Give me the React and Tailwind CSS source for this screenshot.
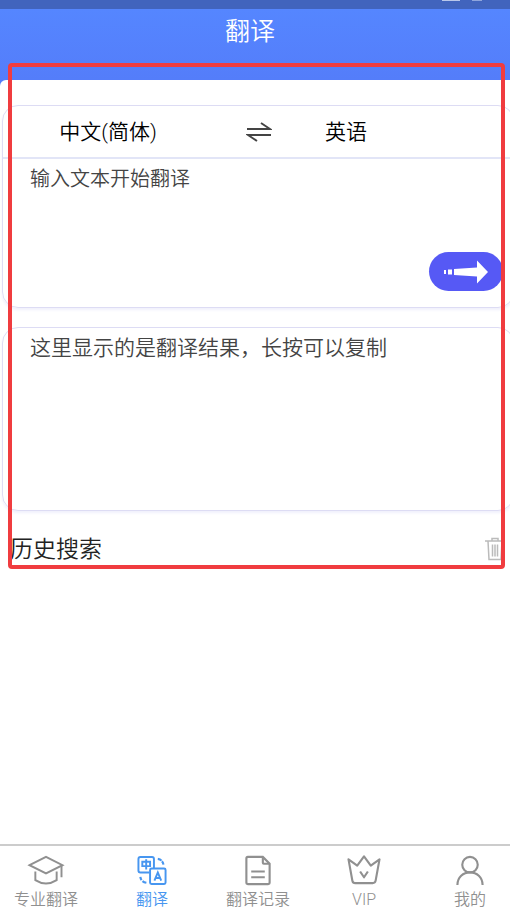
import { useState } from 'react'

const tabs = [
  { id: 'pro', label: '专业翻译', icon: CapIcon },
  { id: 'translate', label: '翻译', icon: TranslateIcon },
  { id: 'records', label: '翻译记录', icon: RecordIcon },
  { id: 'vip', label: 'VIP', icon: CrownIcon },
  { id: 'mine', label: '我的', icon: UserIcon },
]

function CapIcon() {
  return (
    <svg width="38" height="32" viewBox="0 0 38 32" fill="none" stroke="currentColor" strokeWidth="2">
      <path d="M2 10.500 19 2l17 8.500L19 19z" />
      <path d="M8 17v9q11 7 22 0v-9M35 11v12" />
    </svg>
  )
}

function TranslateIcon() {
  return (
    <svg width="32" height="32" viewBox="0 0 32 32" fill="none" stroke="currentColor" strokeWidth="2">
      <path d="M13.500 18H4a2 2 0 0 1-2-2V4a2 2 0 0 1 2-2h12a2 2 0 0 1 2 2v9.500" />
      <path d="M6 7h8v4.500H6zM10 4.500v10.500" />
      <rect x="14" y="14" width="16" height="16" rx="1.500" />
      <path d="m18.500 26.500 3.500-8.500 3.500 8.500M19.800 23.800h4.400" />
      <path d="M22 4q2.500.3 3.800 1.800M26.300 6.500q1.300 1.600 1.500 3.500M4 22.500q.2 2 1.200 3.400M6.200 27q1.500 1.300 4 1.700" strokeWidth="2.200" />
    </svg>
  )
}

function RecordIcon() {
  return (
    <svg width="28" height="32" viewBox="0 0 28 32" fill="none" stroke="currentColor" strokeWidth="2.200">
      <path d="M3.500 2H19l7 7v19.500a1.500 1.500 0 0 1-1.500 1.500h-21A1.500 1.500 0 0 1 2 28.500v-25A1.500 1.500 0 0 1 3.500 2z" />
      <path d="M19 2v6a1 1 0 0 0 1 1h6M7 17h14M7 23h14" />
    </svg>
  )
}

function CrownIcon() {
  return (
    <svg width="36" height="32" viewBox="0 0 36 32" fill="none" stroke="currentColor" strokeWidth="2.200" strokeLinejoin="round">
      <path d="m2 4.500 9 6.500 7-9.500 7 9.500 9-6.500-4 22q-.5 2.500-3 2.500H9q-2.500 0-3-2.500z" />
      <path d="m14 17 4 6 4-6" />
    </svg>
  )
}

function UserIcon() {
  return (
    <svg width="30" height="32" viewBox="0 0 30 32" fill="none" stroke="currentColor" strokeWidth="2.200">
      <circle cx="15" cy="10" r="8" />
      <path d="M2 31C2 23 8 18 15 18s13 5 13 13" />
    </svg>
  )
}

function SwapIcon() {
  return (
    <svg width="26" height="22" viewBox="0 0 26 22" fill="none" stroke="#444" strokeWidth="2">
      <path d="M1 8h23L15 2M25 14H2l9 6" />
    </svg>
  )
}

function GoIcon() {
  return (
    <svg width="44" height="24" viewBox="0 0 44 24" fill="#fff">
      <path d="M0 10h2v4H0zM4 9.500h4v5H4zM10 9 33 7.500V.5L44 12 33 23.500v-7L10 15z" />
    </svg>
  )
}

function TrashIcon() {
  return (
    <svg width="20" height="24" viewBox="0 0 20 24" fill="none" stroke="#bbb" strokeWidth="1.500">
      <path d="M0 4h20M7 4V1.500h6V4M3 4l1 18.500h12L17 4M7.500 7.500v12M10 7.500v12M12.500 7.500v12" />
    </svg>
  )
}

export default function App() {
  const [text, setText] = useState('')
  const [active, setActive] = useState('translate')
  const [langs, setLangs] = useState(['中文(简体)', '英语'])

  return (
    <div className="relative min-h-screen flex flex-col overflow-hidden bg-white font-[350] font-[Roboto,'Noto_Sans_CJK_SC',sans-serif]">
      {/* Status bar */}
      <div className="h-[9px] bg-[#4164bd] flex justify-end items-start gap-3 pr-7">
        <span className="w-[18px] h-px bg-[#b9c7ea]" />
        <span className="w-[10px] h-px bg-[#8fa5dc]" />
      </div>

      <header className="h-[71px] pr-2.5 bg-linear-to-b from-[#5586ff] to-[#547dfa] text-center text-white">
        <h1 className="text-[25px] leading-[46px] font-[350]">翻译</h1>
      </header>

      <div className="bg-[#547dfa]">
        <div className="h-[25px] bg-white rounded-tl-md" />
      </div>

      <main className="flex-1">
        {/* Source text */}
        <section className="ml-0.5 -mr-1 h-[203px] flex flex-col border border-[#dddcf4] rounded-2xl shadow-[0_2px_3px_#f0f0fc]">
          <div className="h-[53px] shrink-0 flex items-center border-b-2 border-[#e2e5f7] text-[21px] text-black">
            <button className="w-[210px] h-full pt-0.5 text-center" aria-label="源语言">{langs[0]}</button>
            <button
              onClick={() => setLangs([langs[1], langs[0]])}
              className="w-[92px] h-full flex items-center justify-center"
              aria-label="交换语言">
              <SwapIcon />
            </button>
            <button className="w-[82px] h-full pt-0.5 text-center" aria-label="目标语言">{langs[1]}</button>
          </div>
          <div className="flex-1 flex">
            <textarea
              value={text}
              onChange={e => setText(e.target.value)}
              placeholder="输入文本开始翻译"
              aria-label="输入文本"
              className="flex-1 resize-none outline-none pl-[27px] pt-1 text-[20px] leading-8 text-[#444] placeholder:text-[#444]"
            />
            <button
              className="self-end w-[74px] h-[39px] mb-4 mr-2.5 flex items-center justify-center rounded-full bg-[#5659f5]"
              aria-label="开始翻译">
              <GoIcon />
            </button>
          </div>
        </section>

        {/* Result */}
        <section className="mt-[19px] ml-0.5 -mr-1 h-[184px] pl-[27px] pt-1 border border-[#dddcf4] rounded-2xl shadow-[0_2px_3px_#f0f0fc]">
          <p className="text-[21px] leading-8 text-[#444]">这里显示的是翻译结果，长按可以复制</p>
        </section>

        <div className="mt-5 h-9 pl-2.5 pr-[5px] flex items-center justify-between">
          <h2 className="text-[23px] leading-9 pt-0.5 font-[350] text-[#222]">历史搜索</h2>
          <button aria-label="清空历史"><TrashIcon /></button>
        </div>
      </main>

      <nav className="h-[68px] pl-1.5 pt-[9px] flex justify-between border-t-2 border-[#ccc]">
        {tabs.map(({ id, label, icon: Icon }) => (
          <button
            key={id}
            onClick={() => setActive(id)}
            className={`w-20 flex flex-col items-center gap-0.5 text-[16px] leading-6 ${active === id ? 'text-[#4796f0]' : 'text-[#909090]'}`}>
            <Icon />
            <span>{label}</span>
          </button>
        ))}
      </nav>

      {/* Highlight frame */}
      <div className="absolute left-2 right-[5px] top-[63px] h-[506px] border-4 border-[#f03c3f] rounded-sm pointer-events-none" />
    </div>
  )
}
